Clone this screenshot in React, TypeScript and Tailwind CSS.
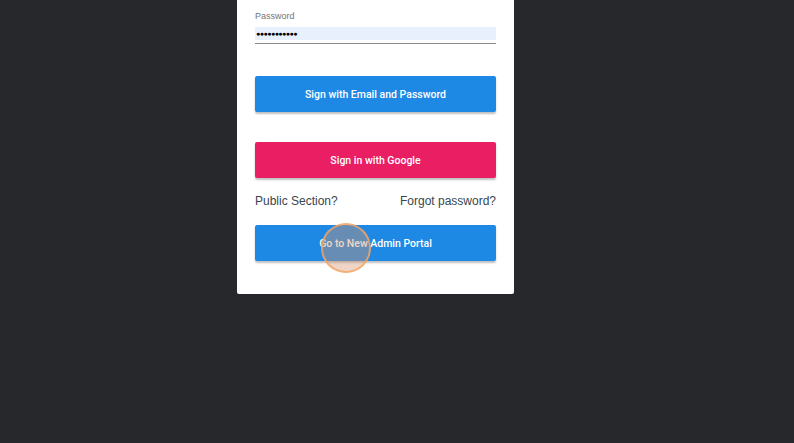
export default function App() {
  return (
    <main
      className="h-[443px] w-[794px] bg-[#27282c] relative overflow-hidden"
      style={{ fontFamily: '"Liberation Sans", Arial, sans-serif' }}
    >
      <div className="ml-[237px] w-[277px] h-[294px] bg-white rounded-b-[2px] px-[18px] pt-[11px]">
        {/* PASSWORD FIELD */}
        <label className="block text-[9px] leading-[11px] text-[#757575]">Password</label>
        <div className="mt-[5px] h-[13px] bg-[#e8f0fe] flex items-center px-[1px]">
          <span className="text-[7px] leading-none tracking-[-0.5px] text-black">●●●●●●●●●●●</span>
        </div>
        <div className="mt-[3px] h-[1px] bg-[#8a8a8a]" />

        {/* BUTTONS */}
        <button className="mt-[32px] w-full h-[36px] pt-[1px] rounded-[2px] bg-[#1e88e5] text-white text-[10.5px] font-medium font-[Roboto] shadow-[0_2px_2px_rgba(0,0,0,0.25)]">
          Sign with Email and Password
        </button>
        <button className="mt-[30px] w-full h-[36px] pt-[1px] rounded-[2px] bg-[#e91e63] text-white text-[10.5px] font-medium font-[Roboto] shadow-[0_2px_2px_rgba(0,0,0,0.25)]">
          Sign in with Google
        </button>

        <div className="mt-[16px] flex justify-between text-[12px] leading-[14px] text-[#37474f]">
          <a href="#">Public Section?</a>
          <a href="#">Forgot password?</a>
        </div>

        <button className="mt-[17px] w-full h-[36px] pt-[1px] rounded-[2px] bg-[#1e88e5] text-white text-[10.5px] font-medium font-[Roboto] shadow-[0_2px_2px_rgba(0,0,0,0.25)]">
          Go to New Admin Portal
        </button>
      </div>

      {/* CLICK INDICATOR */}
      <div className="absolute left-[321px] top-[223px] w-[50px] h-[50px] rounded-full border-2 border-[rgba(245,165,100,0.8)] bg-[rgba(215,150,110,0.4)]" />
    </main>
  );
}
